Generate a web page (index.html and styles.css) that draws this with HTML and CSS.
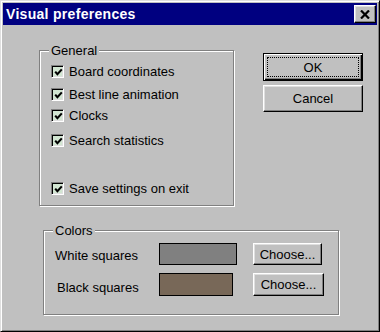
FILE: index.html
```html
<!DOCTYPE html>
<html lang="en">
<head>
    <meta charset="UTF-8">
    <title>Visual preferences</title>
    <link rel="stylesheet" href="styles.css">
</head>
<body>
    <div class="window">
        <div class="titlebar">
            <span class="title">Visual preferences</span>
            <button class="close" aria-label="Close">
                <svg width="10" height="9" viewBox="0 0 10 9"><path d="M1 0.5 L9 8.5 M9 0.5 L1 8.5" stroke="#000" stroke-width="2.2" fill="none"/></svg>
            </button>
        </div>

        <div class="content">
            <div class="top">
                <div class="group general">
                    <span class="legend">General</span>
                    <label class="check"><span class="box"><svg width="9" height="9" viewBox="0 0 9 9"><path d="M1.2 3.6 L3.4 6.2 L7.8 1.4" stroke="#000" stroke-width="2.1" fill="none"/></svg></span>Board coordinates</label>
                    <label class="check"><span class="box"><svg width="9" height="9" viewBox="0 0 9 9"><path d="M1.2 3.6 L3.4 6.2 L7.8 1.4" stroke="#000" stroke-width="2.1" fill="none"/></svg></span>Best line animation</label>
                    <label class="check"><span class="box"><svg width="9" height="9" viewBox="0 0 9 9"><path d="M1.2 3.6 L3.4 6.2 L7.8 1.4" stroke="#000" stroke-width="2.1" fill="none"/></svg></span>Clocks</label>
                    <label class="check"><span class="box"><svg width="9" height="9" viewBox="0 0 9 9"><path d="M1.2 3.6 L3.4 6.2 L7.8 1.4" stroke="#000" stroke-width="2.1" fill="none"/></svg></span>Search statistics</label>
                    <label class="check"><span class="box"><svg width="9" height="9" viewBox="0 0 9 9"><path d="M1.2 3.6 L3.4 6.2 L7.8 1.4" stroke="#000" stroke-width="2.1" fill="none"/></svg></span>Save settings on exit</label>
                </div>

                <div class="actions">
                    <button class="btn default"><span class="focus">OK</span></button>
                    <button class="btn cancel">Cancel</button>
                </div>
            </div>

            <div class="group colors">
                <span class="legend">Colors</span>
                <div class="color-row">
                    <span class="color-label">White squares</span>
                    <span class="swatch white"></span>
                    <button class="btn choose">Choose...</button>
                </div>
                <div class="color-row">
                    <span class="color-label">Black squares</span>
                    <span class="swatch black"></span>
                    <button class="btn choose">Choose...</button>
                </div>
            </div>
        </div>
    </div>
</body>
</html>
```

FILE: styles.css
```css
* {
    box-sizing: border-box;
}
body {
    margin: 0;
    font-family: "Liberation Sans", Arial, sans-serif;
    font-size: 13px;
    color: #000;
}
.window {
    width: 380px;
    height: 332px;
    background-color: #c0c0c0;
    border: 1px solid;
    border-color: #dfdfdf #000 #000 #dfdfdf;
    box-shadow: inset 1px 1px 0 #fff, inset -1px -1px 0 #808080;
    padding: 2px;
}
.titlebar {
    height: 22px;
    background-color: #000080;
    display: flex;
    align-items: center;
    justify-content: space-between;
    padding: 0 1px 0 3px;
}
.title {
    color: #fff;
    font-weight: bold;
    font-size: 14px;
    letter-spacing: 0.3px;
}
.close {
    width: 22px;
    height: 18px;
    padding: 0;
    background-color: #c0c0c0;
    border: 1px solid;
    border-color: #fff #000 #000 #fff;
    box-shadow: inset -1px -1px 0 #808080, inset 1px 1px 0 #dfdfdf;
    display: flex;
    align-items: center;
    justify-content: center;
}
.close svg {
    display: block;
}
.top {
    display: flex;
    align-items: flex-start;
}
.group {
    position: relative;
    border: 1px solid #808080;
    box-shadow: 1px 1px 0 #fff, inset 1px 1px 0 #fff;
}
.legend {
    position: absolute;
    top: -8px;
    left: 9px;
    padding: 0 2px;
    line-height: 15px;
    background-color: #c0c0c0;
}
.general {
    width: 195px;
    height: 156px;
    margin: 25px 0 0 36px;
    padding: 14px 0 0 11px;
}
.check {
    display: flex;
    align-items: center;
    gap: 5px;
    height: 13px;
    line-height: 13px;
}
.check:nth-of-type(2) {
    margin-top: 10px;
}
.check:nth-of-type(3) {
    margin-top: 8px;
}
.check:nth-of-type(4) {
    margin-top: 12px;
}
.check:nth-of-type(5) {
    margin-top: 35px;
}
.box {
    width: 13px;
    height: 13px;
    flex: none;
    background-color: #d2e6d2;
    border: 1px solid;
    border-color: #808080 #fff #fff #808080;
    box-shadow: inset 1px 1px 0 #000, inset -1px -1px 0 #dfdfdf;
    display: flex;
    align-items: center;
    justify-content: center;
}
.box svg {
    display: block;
    margin: 1px 0 0 1px;
}
.actions {
    display: flex;
    flex-direction: column;
    gap: 4px;
    margin: 28px 0 0 29px;
}
.btn {
    font-family: inherit;
    font-size: 13px;
    color: #000;
    background-color: #c0c0c0;
    border: 1px solid;
    border-color: #fff #000 #000 #fff;
    box-shadow: inset -1px -1px 0 #808080, inset 1px 1px 0 #dfdfdf;
    padding: 0;
    text-align: center;
}
.default {
    width: 100px;
    height: 28px;
    padding: 3px;
    border-color: #000;
    box-shadow: inset 1px 1px 0 #fff, inset -1px -1px 0 #000, inset -2px -2px 0 #808080;
}
.focus {
    display: flex;
    align-items: center;
    justify-content: center;
    width: 100%;
    height: 100%;
    border: 1px dotted #000;
}
.cancel {
    width: 100px;
    height: 27px;
}
.colors {
    width: 296px;
    height: 85px;
    margin: 24px 0 0 40px;
    padding: 12px 0 0 11px;
}
.color-row {
    display: grid;
    grid-template-columns: 104px 94px auto;
    align-items: center;
    height: 22px;
}
.color-row + .color-row {
    height: 23px;
    margin-top: 8px;
}
.color-label {
    padding-top: 2px;
}
.color-row + .color-row .color-label {
    padding: 5px 0 0 2px;
}
.swatch {
    height: 22px;
    border: 1px solid #000;
}
.swatch.white {
    width: 78px;
    background-color: #808080;
}
.swatch.black {
    width: 74px;
    height: 23px;
    background-color: #786858;
}
.choose {
    width: 69px;
    height: 22px;
}
.color-row + .color-row .choose {
    width: 71px;
    height: 23px;
}
```
